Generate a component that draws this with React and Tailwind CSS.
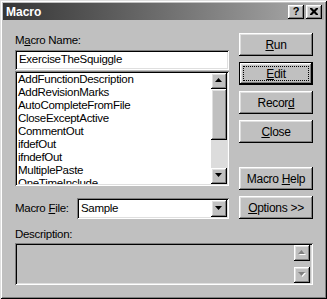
import React from 'react';

const raised =
  'shadow-[inset_-1px_-1px_0_#000,inset_1px_1px_0_#fff,inset_-2px_-2px_0_#808080,inset_2px_2px_0_#dfdfdf]';
const sunken =
  'shadow-[inset_1px_1px_0_#808080,inset_-1px_-1px_0_#fff,inset_2px_2px_0_#000,inset_-2px_-2px_0_#dfdfdf]';

const macros = [
  'AddFunctionDescription',
  'AddRevisionMarks',
  'AutoCompleteFromFile',
  'CloseExceptActive',
  'CommentOut',
  'ifdefOut',
  'ifndefOut',
  'MultiplePaste',
  'OneTimeInclude',
];

const Arrow = ({ down = false, disabled = false }) => (
  <svg width="8" height="6" viewBox="0 0 8 6" className="block">
    {disabled && (
      <polygon
        points={down ? '1,1 8,1 4.5,5' : '4.5,1 8,5 1,5'}
        fill="#ffffff"
      />
    )}
    <polygon
      points={down ? '0,0 7,0 3.5,4' : '3.5,0 7,4 0,4'}
      fill={disabled ? '#808080' : '#000000'}
    />
  </svg>
);

const ArrowButton = ({ down, disabled, className = '' }) => (
  <div className={`flex items-center justify-center w-[16px] h-[16px] bg-[#c0c0c0] ${raised} ${className}`}>
    <Arrow down={down} disabled={disabled} />
  </div>
);

const Button = ({ children, isDefault = false, className = '' }) => {
  if (isDefault) {
    return (
      <div className={`w-[74px] h-[23px] border border-black ${className}`}>
        <div className={`h-full w-full bg-[#c0c0c0] ${raised} p-[3px]`}>
          <div className="h-full w-full border border-dotted border-black flex items-center justify-center text-[12px] leading-none">
            {children}
          </div>
        </div>
      </div>
    );
  }
  return (
    <div
      className={`w-[74px] h-[23px] bg-[#c0c0c0] ${raised} flex items-center justify-center text-[12px] leading-none ${className}`}
    >
      {children}
    </div>
  );
};

export default function App() {
  return (
    <div
      className={`relative w-[327px] h-[299px] bg-[#c0c0c0] text-black tracking-[-0.3px] font-['Liberation_Sans',Arial,sans-serif] shadow-[inset_1px_1px_0_#dfdfdf,inset_-1px_-1px_0_#000,inset_2px_2px_0_#fff,inset_-2px_-2px_0_#808080] overflow-hidden`}
    >
      {/* title bar */}
      <div className="mx-[3px] mt-[3px] h-[17px] flex items-center bg-linear-to-r from-[#363636] to-[#adadad]">
        <span className="pl-[3px] text-white font-bold text-[12px] leading-none tracking-normal">
          Macro
        </span>
        <div className="ml-auto flex gap-[2px] mr-[2px]">
          <div className={`w-[16px] h-[14px] bg-[#c0c0c0] ${raised} flex items-center justify-center text-[11px] font-bold leading-none`}>
            ?
          </div>
          <div className={`w-[16px] h-[14px] bg-[#c0c0c0] ${raised} flex items-center justify-center`}>
            <svg width="8" height="7" viewBox="0 0 8 7">
              <path d="M0 0h2l2 2 2-2h2v1l-2.5 2.5L8 6v1H6L4 5 2 7H0V6l2.5-2.5L0 1z" fill="#000" />
            </svg>
          </div>
        </div>
      </div>

      <div className="pl-[15px] pt-[13px] text-[11.5px]">
        {/* top section */}
        <div className="flex">
          <div className="w-[214px]">
            <div className="h-[15px] leading-[15px]">
              M<span className="underline">a</span>cro Name:
            </div>
            <div className={`mt-[2px] h-[20px] bg-white ${sunken} pl-[4px] flex items-center`}>
              ExerciseTheSquiggle
            </div>
            <div className={`mt-[1px] h-[115px] bg-white ${sunken} p-[2px] flex`}>
              <div className="flex-1 overflow-hidden pl-[1px] leading-[13px]">
                {macros.map((m) => (
                  <div key={m} className="whitespace-nowrap">
                    {m}
                  </div>
                ))}
              </div>
              <div className="w-[16px] flex flex-col">
                <ArrowButton />
                <div className={`h-[51px] bg-[#c0c0c0] ${raised}`} />
                <div className="flex-1 bg-[#dcdcdc]" />
                <ArrowButton down />
              </div>
            </div>
          </div>

          <div className="ml-[10px] flex flex-col">
            <Button>
              <span className="underline">R</span>un
            </Button>
            <Button isDefault className="mt-[6px]">
              <span className="underline">E</span>dit
            </Button>
            <Button className="mt-[6px]">
              Recor<span className="underline">d</span>
            </Button>
            <Button className="mt-[6px]">
              <span className="underline">C</span>lose
            </Button>
            <Button className="mt-[24px]">
              Macro <span className="underline ml-[3px]">H</span>elp
            </Button>
          </div>
        </div>

        {/* macro file row */}
        <div className="mt-[6px] flex h-[23px]">
          <div className="w-[214px] flex items-end">
            <div className="w-[62px] h-[21px] flex items-center">
              Macro <span className="underline ml-[3px]">F</span>ile:
            </div>
            <div className={`flex-1 h-[21px] bg-white ${sunken} p-[2px] flex`}>
              <div className="flex-1 pl-[2px] flex items-center">Sample</div>
              <ArrowButton down className="h-[17px]" />
            </div>
          </div>
          <Button className="ml-[10px]">
            <span className="underline">O</span>ptions &gt;&gt;
          </Button>
        </div>

        {/* description */}
        <div className="mt-[8px] h-[15px] leading-[15px]">Description:</div>
        <div className={`mt-[1px] w-[298px] h-[42px] ${sunken} p-[2px] flex justify-end`}>
          <div className="flex flex-col justify-between mr-[1px]">
            <ArrowButton disabled />
            <ArrowButton down disabled />
          </div>
        </div>
      </div>
    </div>
  );
}
